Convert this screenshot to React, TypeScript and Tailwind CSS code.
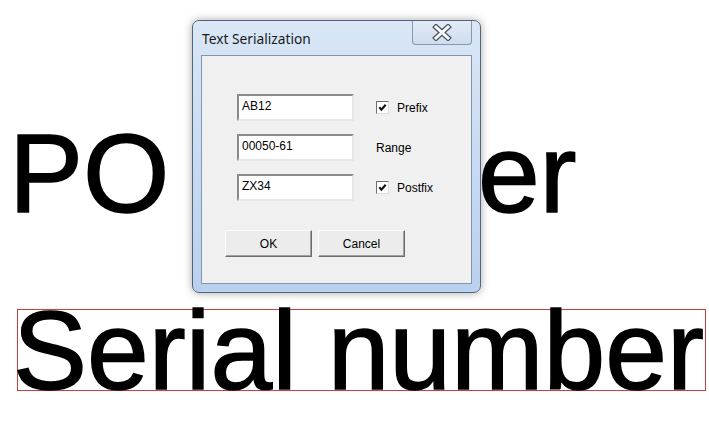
import React from 'react';

function Field({ value }: { value: string }) {
  return (
    <div className="h-[27px] w-[117px] border-2 border-t-[#8a8a8a] border-l-[#8a8a8a] border-r-[#e6e6e6] border-b-[#e6e6e6] bg-white pl-[3px] pt-[3px] text-[12px] leading-[14px] text-black">
      {value}
    </div>
  );
}

function Check({ label }: { label: string }) {
  return (
    <div className="flex h-[27px] items-center gap-[8px] text-[12px] text-black">
      <div className="flex h-[13px] w-[13px] items-center justify-center border border-t-[#6e6e6e] border-l-[#6e6e6e] border-r-[#dcdcdc] border-b-[#dcdcdc] bg-white">
        <svg width="9" height="9" viewBox="0 0 9 9">
          <path d="M1.3 4.3 L3.4 6.6 L7.7 1.8" fill="none" stroke="#111" strokeWidth="2.1" />
        </svg>
      </div>
      <span>{label}</span>
    </div>
  );
}

function Btn({ label }: { label: string }) {
  return (
    <button className="h-[27px] w-[87px] border border-t-[#fcfcfc] border-l-[#fcfcfc] border-r-[#6b6b6b] border-b-[#6b6b6b] bg-[#ececec] text-[12px] text-black shadow-[inset_-1px_-1px_0_#a0a0a0]">
      {label}
    </button>
  );
}

function Dialog() {
  return (
    <div className="absolute left-[192px] top-[20px] flex h-[273px] w-[289px] flex-col rounded-[7px] border border-[#56667a] bg-gradient-to-b from-[#d9e7f7] via-[#c8dbf2] to-[#b9d0ee] px-[8px] pb-[8px] shadow-[0_0_9px_rgba(0,0,0,0.35)]">
      <div className="flex h-[34px] items-start justify-between">
        <span className="pl-[1px] pt-[10px] font-['Segoe_UI','Noto_Sans',sans-serif] text-[13.75px] leading-[16px] text-[#1a1a1a]">
          Text Serialization
        </span>
        <div className="flex h-[24px] w-[60px] items-center justify-center rounded-b-[4px] border border-t-0 border-[#8797ac] bg-gradient-to-b from-[#e3ecf7] to-[#cfdcee]">
          <svg width="22" height="17" viewBox="0 0 22 17">
            <path d="M5 3 L17 14 M17 3 L5 14" stroke="#4d5665" strokeWidth="5.5" strokeLinecap="square" />
            <path d="M5 3 L17 14 M17 3 L5 14" stroke="#ffffff" strokeWidth="3" strokeLinecap="square" />
          </svg>
        </div>
      </div>
      <div className="flex-1 border border-[#8295ad] bg-[#f0f0f0] font-['Liberation_Sans',Arial,sans-serif]">
        <div className="ml-[35px] mt-[38px] grid grid-cols-[117px_auto] gap-x-[22px] gap-y-[13px]">
          <Field value="AB12" />
          <Check label="Prefix" />
          <Field value="00050-61" />
          <div className="flex h-[27px] items-center text-[12px] text-black">Range</div>
          <Field value="ZX34" />
          <Check label="Postfix" />
        </div>
        <div className="ml-[23px] mt-[29px] flex gap-[6px]">
          <Btn label="OK" />
          <Btn label="Cancel" />
        </div>
      </div>
    </div>
  );
}

export default function App() {
  return (
    <div className="relative h-[433px] w-[709px] overflow-hidden bg-white font-['Liberation_Sans',Arial,sans-serif] text-black">
      <div className="pl-[9px] pt-[133px] text-[111px] leading-[82px] [-webkit-text-stroke:1.5px_black]">PO number</div>
      <div className="ml-[17px] mt-[94px] h-[82px] w-[689px] border border-[#c84040]">
        <div className="-ml-[5px] whitespace-nowrap text-[111px] leading-[82px] [-webkit-text-stroke:1.5px_black]">Serial number</div>
      </div>
      <Dialog />
    </div>
  );
}
